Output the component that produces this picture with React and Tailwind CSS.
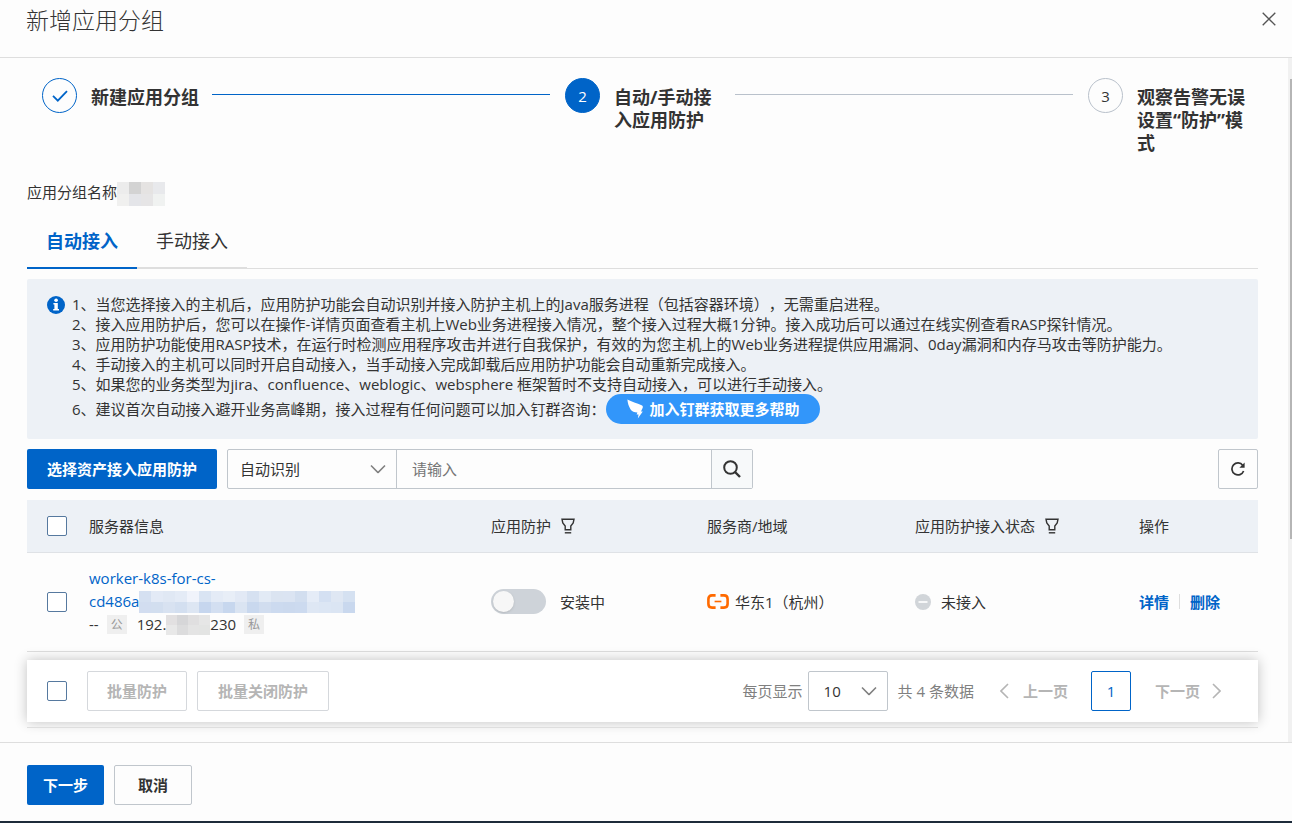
const ICON = { fill: 'none', stroke: 'currentColor' };

function Chevron({ dir = 'down', className = '' }) {
  const d = { down: 'M1 1 L8 8 L15 1', left: 'M8 1 L1 8 L8 15', right: 'M1 1 L8 8 L1 15' }[dir];
  const down = dir === 'down';
  return (
    <svg {...ICON} strokeWidth="1.6" viewBox={down ? '0 0 16 9' : '0 0 9 16'} className={`${down ? 'h-[9px] w-4' : 'h-4 w-[9px]'} ${className}`}>
      <path d={d} />
    </svg>
  );
}

function FilterIcon() {
  return (
    <svg {...ICON} strokeWidth="1.4" viewBox="0 0 14 16" className="h-4 w-3.5">
      <path d="M1 1.2 H13 L12.2 5 L9.8 8 V11.8 H4.2 V8 L1.8 5 Z" />
      <path d="M3.8 14.8 H10.2" />
    </svg>
  );
}

function Mosaic({ rows, cell, label }) {
  return (
    <span role="img" aria-label={label} className="inline-flex flex-col">
      {rows.map((row, i) => (
        <span key={i} className="flex">
          {row.map((c, j) => (
            <span key={j} className={cell} style={{ backgroundColor: c }} />
          ))}
        </span>
      ))}
    </span>
  );
}

const NAME_MOSAIC = [
  ['#ececec', '#d3d3d3', '#e5e3e2', '#e8e9ec'],
  ['#f0f0ef', '#e4e5e9', '#e6e5e6', '#f0f2f1'],
];
const HOST_MOSAIC = [
  ['#d5e0f1', '#e3eaf6', '#e0e8f4', '#e4ebf6', '#f0f3fb', '#d9e4f3', '#e4ebf6', '#e8eef7', '#e2e9f5', '#d6e1f1', '#e2eaf5', '#dbe4f1', '#dbe4f2', '#d2deef', '#e5ecf7', '#d4e0f2', '#dfe7f3', '#d5e1f1'],
  ['#d2ddf0', '#d2deef', '#d8e2f1', '#d3dff0', '#dde6f3', '#c6d6ee', '#d3dff1', '#c7d7ee', '#dae4f2', '#c9d8ee', '#d1ddef', '#ccdaef', '#cbd9ee', '#ccdaef', '#dee7f4', '#dce6f4', '#dbe5f3', '#c9d8ee'],
];
const IP_MOSAIC = [
  ['#e2e0e1', '#d6d6d8', '#e0dfe0', '#e6e6e6'],
  ['#e8e8e8', '#dcdcdd', '#e4e4e4', '#e3e4e3'],
];

function Checkbox({ label }) {
  return (
    <input
      type="checkbox"
      aria-label={label}
      className="block size-5 shrink-0 appearance-none rounded-[2px] border border-[#56799f] bg-white checked:bg-[#0064c8]"
    />
  );
}

function Step({ state, mark, children, last }) {
  const circle = {
    done: 'border-[#0064c8] text-[#0064c8]',
    active: 'border-[#0064c8] bg-[#0064c8] text-white',
    todo: 'border-[#b9c1cb] text-[#333]',
  }[state];
  return (
    <li className={`flex items-start ${last ? '' : 'flex-1'}`}>
      <span className={`flex size-[35px] shrink-0 items-center justify-center rounded-full border text-[15px] ${circle}`}>{mark}</span>
      <span className="ml-3.5 w-[110px] shrink-0 pt-2 text-[18px] leading-[23px] font-bold">{children}</span>
      {!last && <span className={`mt-4 mr-[15px] ml-[11px] h-px flex-1 ${state === 'done' ? 'bg-[#0064c8]' : 'bg-[#b9c1cb]'}`} />}
    </li>
  );
}

const TIPS = [
  '1、当您选择接入的主机后，应用防护功能会自动识别并接入防护主机上的Java服务进程（包括容器环境），无需重启进程。',
  '2、接入应用防护后，您可以在操作-详情页面查看主机上Web业务进程接入情况，整个接入过程大概1分钟。接入成功后可以通过在线实例查看RASP探针情况。',
  '3、应用防护功能使用RASP技术，在运行时检测应用程序攻击并进行自我保护，有效的为您主机上的Web业务进程提供应用漏洞、0day漏洞和内存马攻击等防护能力。',
  '4、手动接入的主机可以同时开启自动接入，当手动接入完成卸载后应用防护功能会自动重新完成接入。',
  '5、如果您的业务类型为jira、confluence、weblogic、websphere 框架暂时不支持自动接入，可以进行手动接入。',
];

function Notice() {
  return (
    <section className="mt-2.5 flex gap-[7px] rounded-[2px] bg-[#edf1f6] px-5 py-[15px]">
      <svg viewBox="0 0 18 18" className="mt-0.5 size-[18px] shrink-0">
        <circle cx="9" cy="9" r="9" fill="#0064c8" />
        <circle cx="9.1" cy="4.2" r="1.8" fill="#fff" />
        <path d="M6.4 7 H10.8 V13 H12 V14.6 H6.2 V13 H7.4 V8.6 H6.4 Z" fill="#fff" />
      </svg>
      <ul className="leading-5 [text-spacing-trim:space-all]">
        {TIPS.map((t) => (
          <li key={t}>{t}</li>
        ))}
        <li className="flex items-center">
          6、建议首次自动接入避开业务高峰期，接入过程有任何问题可以加入钉群咨询：
          <button type="button" className="flex h-[30px] items-center gap-1.5 rounded-full bg-[#3296fa] px-5 font-bold text-white">
            <svg viewBox="0 0 18 20" className="h-5 w-[18px]" fill="currentColor">
              <path d="M1.4 0.6 C5.5 2.8 11 4.2 15.6 6.2 C17 6.9 17.1 7.8 16.6 9 L15 12.4 H16.8 L11.8 19.6 L12.6 15.4 H10.6 L11.4 13.4 C8.4 13.4 5.8 12.4 4.6 10.4 C2.8 7.6 1.6 4 1.4 0.6 Z" />
            </svg>
            加入钉群获取更多帮助
          </button>
        </li>
      </ul>
    </section>
  );
}

function Toolbar() {
  return (
    <div className="mt-2.5 flex items-center gap-2.5">
      <button type="button" className="h-10 w-[190px] rounded-[2px] bg-[#0064c8] font-bold text-white">
        选择资产接入应用防护
      </button>
      <div className="flex h-10 w-[526px] rounded-[2px] border border-[#c0c6cc]">
        <div className="relative w-[168px]">
          <select aria-label="识别方式" className="h-full w-full appearance-none bg-transparent pl-3">
            <option>自动识别</option>
          </select>
          <Chevron className="pointer-events-none absolute top-1/2 right-2.5 -translate-y-1/2 text-[#808080]" />
        </div>
        <input aria-label="搜索" placeholder="请输入" className="min-w-0 flex-1 border-x border-[#c0c6cc] px-[15px] placeholder:text-[#757575]" />
        <button type="button" aria-label="查询" className="flex w-10 items-center justify-center bg-[#f7f9fa]">
          <svg {...ICON} strokeWidth="2" viewBox="0 0 18 18" className="size-[18px]">
            <circle cx="7.5" cy="7.5" r="6.3" />
            <path d="M12 12 L17 17" strokeWidth="2.4" />
          </svg>
        </button>
      </div>
      <button type="button" aria-label="刷新" className="ml-auto flex size-10 items-center justify-center rounded-[2px] border border-[#c0c6cc]">
        <svg {...ICON} strokeWidth="1.7" viewBox="0 0 14 14" className="size-3.5">
          <path d="M12.6 9 A6 6 0 1 1 11.8 3.4" />
          <path d="M13.6 0.6 V5.8 H8.4 Z" fill="currentColor" stroke="none" />
        </svg>
      </button>
    </div>
  );
}

function Tag({ children }) {
  return <span className="mx-2 inline-flex h-[19px] w-5 items-center justify-center bg-[#efefef] text-[12px] text-[#999]">{children}</span>;
}

function ServerTable() {
  return (
    <table className="mt-[11px] w-full table-fixed border-collapse text-left">
      <colgroup>
        <col className="w-[42px]" />
        <col />
        <col className="w-[216px]" />
        <col className="w-[208px]" />
        <col className="w-[224px]" />
        <col className="w-[139px]" />
      </colgroup>
      <thead>
        <tr className="h-[52px] border-b border-[#dfe2e6] bg-[#edf1f6]">
          <th className="pl-5"><Checkbox label="全选" /></th>
          <th className="px-5 font-normal">服务器信息</th>
          <th className="px-5 font-normal"><span className="flex items-center gap-2.5">应用防护<FilterIcon /></span></th>
          <th className="px-5 font-normal">服务商/地域</th>
          <th className="px-5 font-normal"><span className="flex items-center gap-2.5">应用防护接入状态<FilterIcon /></span></th>
          <th className="px-5 font-normal">操作</th>
        </tr>
      </thead>
      <tbody>
        <tr className="h-[99px] border-b border-[#dedede]">
          <td className="pl-5"><Checkbox label="选择服务器" /></td>
          <td className="px-5 leading-[23px]">
            <a href="#server" className="block font-medium text-[#0064c8]">
              worker-k8s-for-cs-
              <span className="flex h-[23px] items-center">
                cd486a
                <Mosaic label="已隐藏" rows={HOST_MOSAIC} cell="h-[11px] w-3" />
              </span>
            </a>
            <div className="flex h-[23px] items-center">
              --<Tag>公</Tag>
              <span className="ml-0.5">192.</span>
              <Mosaic label="已隐藏" rows={IP_MOSAIC} cell="h-2.5 w-[11px]" />
              230<Tag>私</Tag>
            </div>
          </td>
          <td className="px-5">
            <span className="flex items-center gap-3.5">
              <button type="button" role="switch" aria-checked="false" aria-label="应用防护" className="h-[25px] w-[55px] rounded-full bg-[#ced3d9] p-0.5">
                <span className="block size-[21px] rounded-full bg-[#f7f7f7] shadow" />
              </button>
              安装中
            </span>
          </td>
          <td className="px-5">
            <span className="flex items-center gap-1.5">
              <svg viewBox="0 0 22 15" fill="none" stroke="#ff6a00" className="h-[15px] w-[22px]">
                <path strokeWidth="2.6" d="M8.6 1.4 H5 Q1.4 1.4 1.4 5 V10 Q1.4 13.6 5 13.6 H8.6 M13.4 1.4 H17 Q20.6 1.4 20.6 5 V10 Q20.6 13.6 17 13.6 H13.4" />
                <path strokeWidth="1.6" d="M7.6 7.5 H14.4" />
              </svg>
              华东1（杭州）
            </span>
          </td>
          <td className="px-5">
            <span className="flex items-center gap-2.5">
              <svg viewBox="0 0 16 16" className="size-4">
                <circle cx="8" cy="8" r="8" fill="#d1d5d9" />
                <path d="M3.5 8 H12.5" stroke="#fff" strokeWidth="1.6" />
              </svg>
              未接入
            </span>
          </td>
          <td className="px-5">
            <span className="flex items-center gap-2.5 font-bold text-[#0064c8]">
              <a href="#detail">详情</a>
              <span className="h-[15px] w-px bg-[#dedede]" />
              <a href="#delete">删除</a>
            </span>
          </td>
        </tr>
      </tbody>
    </table>
  );
}

function BatchBar() {
  const ghost = 'h-10 rounded-[2px] border border-[#d5d8dc] font-bold text-[#b5b5b5]';
  return (
    <div className="mt-2 flex h-[62px] items-center bg-white pr-[37px] pl-5 text-[#808080] shadow-[0_0_12px_rgba(0,0,0,0.24)]">
      <Checkbox label="选择本页" />
      <button type="button" disabled className={`ml-5 w-[100px] ${ghost}`}>批量防护</button>
      <button type="button" disabled className={`ml-2.5 w-[132px] ${ghost}`}>批量关闭防护</button>
      <label htmlFor="page-size" className="ml-auto">每页显示</label>
      <div className="relative ml-[5px] h-10 w-20 rounded-[2px] border border-[#c0c6cc]">
        <select id="page-size" className="h-full w-full appearance-none bg-transparent pl-[15px] text-[#333]">
          <option>10</option>
        </select>
        <Chevron className="pointer-events-none absolute top-1/2 right-2.5 -translate-y-1/2" />
      </div>
      <span className="ml-2.5">共 4 条数据</span>
      <button type="button" disabled className="ml-[26px] flex items-center gap-3.5 font-bold text-[#b5b5b5]">
        <Chevron dir="left" />上一页
      </button>
      <button type="button" aria-current="page" className="ml-[23px] size-10 rounded-[2px] border border-[#0064c8] font-medium text-[#0064c8]">1</button>
      <button type="button" disabled className="ml-6 flex items-center gap-3 font-bold text-[#b5b5b5]">
        下一页<Chevron dir="right" />
      </button>
    </div>
  );
}

export default function App() {
  return (
    <div className="flex min-h-screen flex-col border-b-2 border-[#1d2b3a] bg-[#fdfdfd] font-['Open_Sans','Noto_Sans_CJK_SC',sans-serif] text-[15px] leading-5 text-[#333]">
      <header className="flex h-[58px] items-start justify-between border-b border-[#dedede] pr-4 pl-[26px]">
        <h1 className="pt-1 text-[23px] leading-8 font-light">新增应用分组</h1>
        <button type="button" aria-label="关闭" className="mt-3 text-[#555]">
          <svg {...ICON} strokeWidth="1.3" viewBox="0 0 14 14" className="size-3.5">
            <path d="M0.7 0.7 L13.3 13.3 M13.3 0.7 L0.7 13.3" />
          </svg>
        </button>
      </header>
      <div className="flex flex-1">
        <main className="min-w-0 flex-1 pr-[30px] pl-[27px]">
          <ol className="flex pt-5 pr-[11px] pl-[15px]">
            <Step
              state="done"
              mark={
                <svg {...ICON} strokeWidth="1.8" viewBox="0 0 16 12" className="h-3 w-4">
                  <path d="M1 5.8 L5.8 10.6 L15 1.2" />
                </svg>
              }
            >
              新建应用分组
            </Step>
            <Step state="active" mark="2">自动/手动接入应用防护</Step>
            <Step state="todo" mark="3" last>观察告警无误设置“防护”模式</Step>
          </ol>
          <p className="mt-[27px] flex h-6 items-start">
            应用分组名称
            <Mosaic label="已隐藏" rows={NAME_MOSAIC} cell="size-3" />
          </p>
          <div role="tablist" className="mt-2 flex border-b border-[#dedede] text-[18px]">
            <button type="button" role="tab" aria-selected="true" className="-mb-px h-[55px] w-[110px] border-b-2 border-[#0064c8] font-bold text-[#0064c8]">
              自动接入
            </button>
            <button type="button" role="tab" aria-selected="false" className="-mb-px h-[55px] w-[110px] border-b-2 border-[#dedede]">
              手动接入
            </button>
          </div>
          <Notice />
          <Toolbar />
          <ServerTable />
          <BatchBar />
          <div className="mt-[5px] border-b border-[#dedede]" />
        </main>
        <div aria-hidden="true" className="flex w-1 flex-col items-end bg-[#f1f1f1] pt-[21px]">
          <span className="h-[460px] w-0.5 bg-[#b5b5b5]" />
        </div>
      </div>
      <footer className="flex h-[79px] items-start gap-2.5 border-t border-[#dedede] pt-[22px] pl-[27px] font-bold">
        <button type="button" className="h-10 w-[77px] rounded-[2px] bg-[#0064c8] text-white">下一步</button>
        <button type="button" className="h-10 w-[78px] rounded-[2px] border border-[#c0c6cc]">取消</button>
      </footer>
    </div>
  );
}
